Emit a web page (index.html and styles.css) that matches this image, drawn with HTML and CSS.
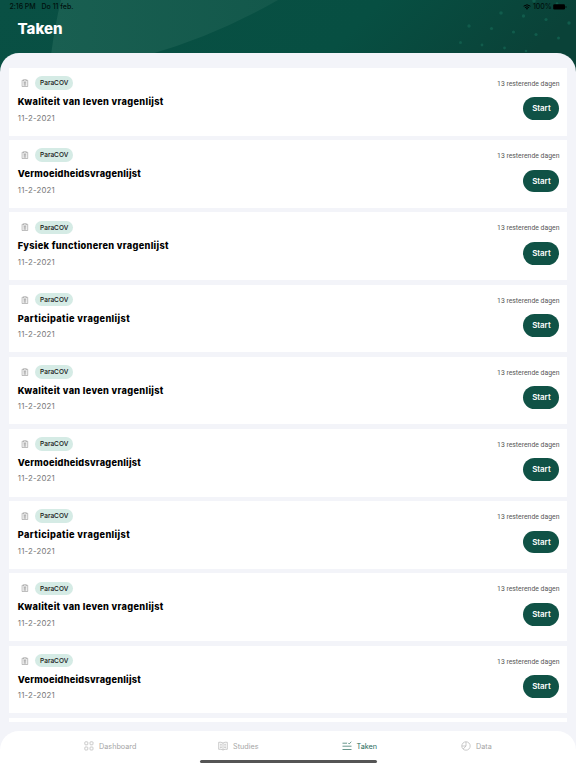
FILE: index.html
```html
<!DOCTYPE html>
<html lang="nl">
<head>
<meta charset="utf-8">
<title>Taken</title>
<link rel="stylesheet" href="styles.css">
</head>
<body>
<svg class="defs" width="0" height="0">
  <symbol id="clipboard" viewBox="0 0 8 8"><path d="M2.4 1.300H1.100v6.200h5.600V1.300H5.400M2.500.7h2.800v1.400H2.500zM2.400 3.400h3M2.400 4.800h3M2.400 6.100h3M3.900 3v3.500" fill="none" stroke="#929292" stroke-width=".6"/></symbol>
</svg>
<div class="screen">
  <svg class="backdrop" viewBox="0 0 576 80">
    <defs>
      <linearGradient id="base" x1="0" y1="0" x2="1" y2="0.14"><stop offset="0" stop-color="#095044"/><stop offset=".65" stop-color="#074f42"/><stop offset="1" stop-color="#0a4238"/></linearGradient>
      <linearGradient id="leaf" x1="0" y1="0" x2="1" y2="0"><stop offset="0" stop-color="#195f51"/><stop offset="1" stop-color="#13584b"/></linearGradient>
    </defs>
    <rect width="576" height="80" fill="url(#base)"/>
    <path d="M61 0Q55 25 51 55H148Q215 36 278 0Z" fill="url(#leaf)"/>
    <g fill="#115c4c"><circle cx="469" cy="26" r="1.7"/><circle cx="501" cy="13" r="1.8"/><circle cx="491.500" cy="28.500" r="1.6"/><circle cx="523.500" cy="16" r="1.7"/><circle cx="513.500" cy="32" r="1.6"/><circle cx="546" cy="19.500" r="1.6"/><circle cx="536" cy="34.500" r="1.6"/><circle cx="569" cy="23" r="1.7"/><circle cx="558.500" cy="38" r="1.5"/><circle cx="460.500" cy="42.500" r="1.5"/><circle cx="482" cy="45" r="1.4"/><circle cx="504.500" cy="48" r="1.4"/><circle cx="526" cy="51" r="1.3"/><circle cx="534" cy="1" r="1.7"/><circle cx="557" cy="3.500" r="1.3"/></g>
  </svg>
  <header class="header">
    <div class="status">
      <span class="time">2:16 PM</span><span class="date">Do 11 feb.</span>
      <svg class="wifi" viewBox="0 0 8 6"><path d="M.6 2.200Q4-.7 7.400 2.200M1.900 3.600Q4 1.900 6.100 3.600" fill="none" stroke="#000" stroke-width="1"/><path d="M2.900 4.500Q4 3.700 5.100 4.500L4 5.800Z"/></svg>
      <span class="level">100%</span>
      <svg class="battery" viewBox="0 0 14 6"><rect x=".2" y=".3" width="11.800" height="5.200" rx="1.300"/><path d="M12.600 2v2q1-.3 1-1t-1-1"/></svg>
    </div>
    <h1 class="heading">Taken</h1>
  </header>
  <main class="sheet">
    <div class="list">
      <article class="card"><div class="meta"><svg class="clip"><use href="#clipboard"/></svg><span class="tag">ParaCOV</span></div><h2 class="title">Kwaliteit van leven vragenlijst</h2><p class="day">11-2-2021</p><div class="side"><span class="left">13 resterende dagen</span><button class="start">Start</button></div></article>
      <article class="card"><div class="meta"><svg class="clip"><use href="#clipboard"/></svg><span class="tag">ParaCOV</span></div><h2 class="title compact">Vermoeidheidsvragenlijst</h2><p class="day">11-2-2021</p><div class="side"><span class="left">13 resterende dagen</span><button class="start">Start</button></div></article>
      <article class="card"><div class="meta"><svg class="clip"><use href="#clipboard"/></svg><span class="tag">ParaCOV</span></div><h2 class="title">Fysiek functioneren vragenlijst</h2><p class="day">11-2-2021</p><div class="side"><span class="left">13 resterende dagen</span><button class="start">Start</button></div></article>
      <article class="card"><div class="meta"><svg class="clip"><use href="#clipboard"/></svg><span class="tag">ParaCOV</span></div><h2 class="title loose">Participatie vragenlijst</h2><p class="day">11-2-2021</p><div class="side"><span class="left">13 resterende dagen</span><button class="start">Start</button></div></article>
      <article class="card"><div class="meta"><svg class="clip"><use href="#clipboard"/></svg><span class="tag">ParaCOV</span></div><h2 class="title">Kwaliteit van leven vragenlijst</h2><p class="day">11-2-2021</p><div class="side"><span class="left">13 resterende dagen</span><button class="start">Start</button></div></article>
      <article class="card"><div class="meta"><svg class="clip"><use href="#clipboard"/></svg><span class="tag">ParaCOV</span></div><h2 class="title compact">Vermoeidheidsvragenlijst</h2><p class="day">11-2-2021</p><div class="side"><span class="left">13 resterende dagen</span><button class="start">Start</button></div></article>
      <article class="card"><div class="meta"><svg class="clip"><use href="#clipboard"/></svg><span class="tag">ParaCOV</span></div><h2 class="title loose">Participatie vragenlijst</h2><p class="day">11-2-2021</p><div class="side"><span class="left">13 resterende dagen</span><button class="start">Start</button></div></article>
      <article class="card"><div class="meta"><svg class="clip"><use href="#clipboard"/></svg><span class="tag">ParaCOV</span></div><h2 class="title">Kwaliteit van leven vragenlijst</h2><p class="day">11-2-2021</p><div class="side"><span class="left">13 resterende dagen</span><button class="start">Start</button></div></article>
      <article class="card"><div class="meta"><svg class="clip"><use href="#clipboard"/></svg><span class="tag">ParaCOV</span></div><h2 class="title compact">Vermoeidheidsvragenlijst</h2><p class="day">11-2-2021</p><div class="side"><span class="left">13 resterende dagen</span><button class="start">Start</button></div></article>
      <article class="card"></article>
    </div>
  </main>
  <footer class="footer">
    <nav class="tabs">
      <a class="tab"><svg viewBox="0 0 10 10"><g><rect x=".8" y=".8" width="3" height="3" rx=".7"/><rect x="6" y=".8" width="3" height="3" rx=".7"/><rect x=".8" y="6" width="3" height="3" rx=".7"/><rect x="6" y="6" width="3" height="3" rx=".7"/></g></svg><span>Dashboard</span></a>
      <a class="tab"><svg viewBox="0 0 10 10"><path d="M5 2Q3 .8.700 1.300v7Q3 7.900 5 9q2-1.100 4.300-.7v-7Q7 .8 5 2v7M1.900 3.300h2M1.900 5h2M1.900 6.600h2M6.100 3.300h2M6.100 5h2M6.100 6.600h2"/></svg><span>Studies</span></a>
      <a class="tab active"><svg viewBox="0 0 10 10"><path d="M.5 2.200h4.500M.5 5.200h9M.5 8.500h9M6.200 1.900l1 1L9.300.8"/></svg><span>Taken</span></a>
      <a class="tab"><svg viewBox="0 0 10 10"><circle cx="5" cy="5" r="4.200"/><path d="M5 .8V5H.8M5 5L2.200 8"/></svg><span>Data</span></a>
    </nav>
    <div class="home"></div>
  </footer>
</div>
</body>
</html>
```

FILE: styles.css
```css
* { box-sizing: border-box; }
body { margin: 0; font-family: Inter, "Liberation Sans", sans-serif; }
.defs { position: absolute; }
.screen { position: relative; width: 576px; height: 768px; overflow: hidden; display: flex; flex-direction: column; background: #f3f4f9; }
.backdrop { position: absolute; top: 0; left: 0; width: 576px; height: 80px; }
.header { position: relative; height: 53px; flex: none; }
.status { display: flex; align-items: center; height: 14px; padding: 0 10px 0 9.500px; font-size: 7px; line-height: 14px; font-weight: 500; color: #00110d; white-space: nowrap; }
.time { width: 32px; letter-spacing: -.05px; }
.date { margin-right: auto; }
.wifi { width: 8px; height: 6px; margin-right: 2px; }
.level { width: 20px; letter-spacing: -.1px; }
.battery { width: 14px; height: 6px; margin-right: -1px; }
.heading { margin: 5px 0 0 17.500px; font-size: 15px; line-height: 20px; font-weight: 800; color: #fff; }
.sheet { position: relative; flex: none; height: 678px; padding: 15px 9.300px 9px; border-radius: 19px 19px 0 0; background: #f3f4f9; }
.list { height: 654px; display: flex; flex-direction: column; gap: 4.500px; overflow: hidden; }
.card { flex: none; height: 67.700px; padding: 8px 7.300px 0 8.500px; display: grid; grid-template-columns: 1fr auto; grid-template-rows: 14px 22.500px 10px; background: #fff; }
.meta { display: flex; align-items: center; gap: 6.300px; padding-left: 3px; }
.clip { width: 8px; height: 8px; }
.tag { width: 38.200px; height: 13.500px; border-radius: 7px; background: #d5ebe5; text-align: center; font: 500 6.500px/14.500px Inter, sans-serif; color: #111; }
.title { margin: 0; font-size: 9.200px; line-height: 23.600px; font-weight: 800; letter-spacing: .32px; color: #000; white-space: nowrap; }
.title.compact { letter-spacing: .23px; }
.title.loose { letter-spacing: .39px; }
.day { margin: 0; font-size: 7.800px; line-height: 10.500px; letter-spacing: .18px; color: #777; grid-column: 1; }
.side { grid-column: 2; grid-row: 1 / 4; display: flex; flex-direction: column; align-items: flex-end; }
.left { font: 400 6.850px/16px Roboto, sans-serif; color: #565656; }
.start { margin: 5.400px 0 0; width: 36px; height: 22.800px; padding: 0; border: 0; border-radius: 12px; background: #105246; color: #fff; font: 600 7.900px/22.800px Inter, sans-serif; }
.footer { position: relative; flex: none; height: 37px; border-radius: 19px 19px 0 0; background: #fff; }
.tabs { display: grid; grid-template-columns: 134px 123.500px 119.500px 60px; padding: 8px 0 0 84px; }
.tab { display: flex; align-items: center; height: 14px; gap: 5px; font-size: 7.250px; color: #a5a5a5; }
.tab svg { width: 10px; height: 10px; fill: none; stroke: #b4b4b4; stroke-width: .7; }
.active { color: #286a5b; }
.active svg { stroke: #286a5b; }
.home { width: 177px; height: 3px; margin: 7.300px auto 0; border-radius: 2px; background: #555; }
```
